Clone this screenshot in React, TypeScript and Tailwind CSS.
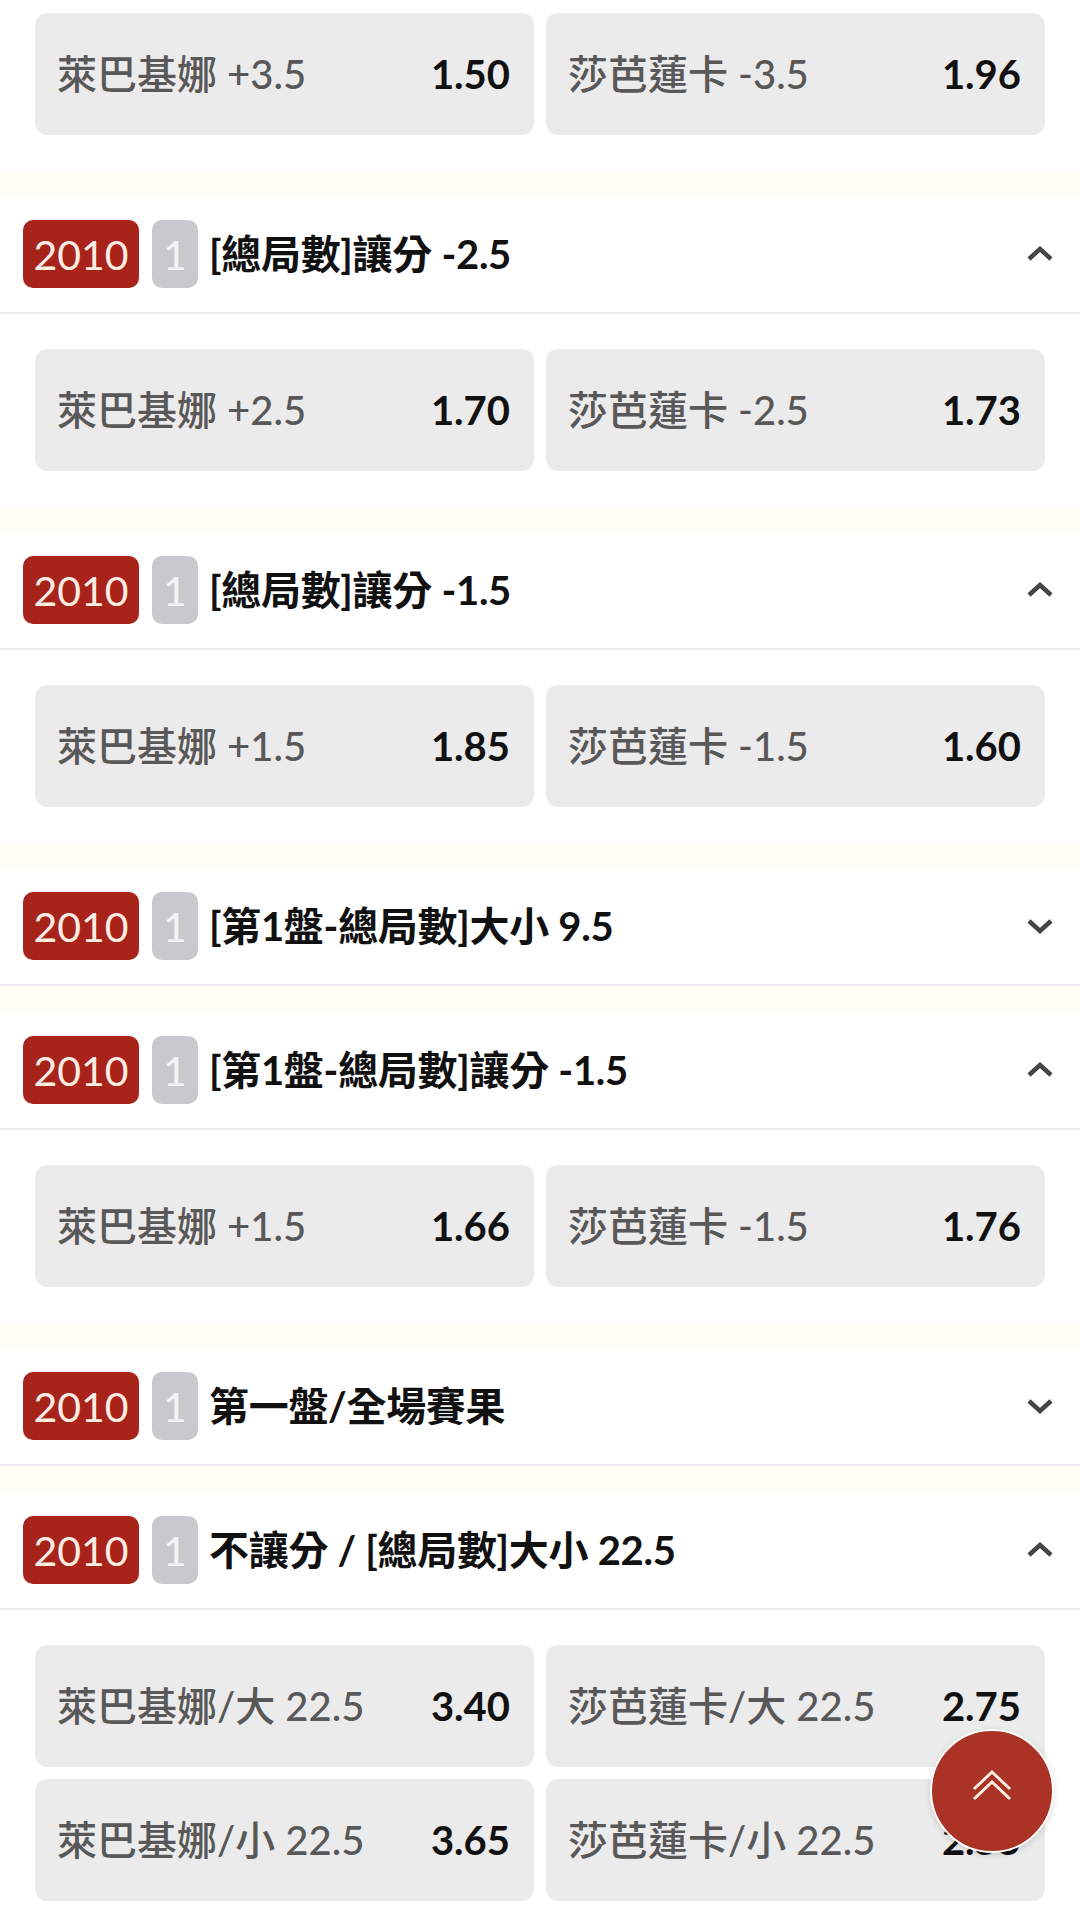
import React from "react";

type Option = { label: string; odds: string };
type Market = { title?: string; open: boolean; options: Option[] };

const markets: Market[] = [
  {
    open: true,
    options: [
      { label: "萊巴基娜 +3.5", odds: "1.50" },
      { label: "莎芭蓮卡 -3.5", odds: "1.96" },
    ],
  },
  {
    title: "[總局數]讓分 -2.5",
    open: true,
    options: [
      { label: "萊巴基娜 +2.5", odds: "1.70" },
      { label: "莎芭蓮卡 -2.5", odds: "1.73" },
    ],
  },
  {
    title: "[總局數]讓分 -1.5",
    open: true,
    options: [
      { label: "萊巴基娜 +1.5", odds: "1.85" },
      { label: "莎芭蓮卡 -1.5", odds: "1.60" },
    ],
  },
  { title: "[第1盤-總局數]大小 9.5", open: false, options: [] },
  {
    title: "[第1盤-總局數]讓分 -1.5",
    open: true,
    options: [
      { label: "萊巴基娜 +1.5", odds: "1.66" },
      { label: "莎芭蓮卡 -1.5", odds: "1.76" },
    ],
  },
  { title: "第一盤/全場賽果", open: false, options: [] },
  {
    title: "不讓分 / [總局數]大小 22.5",
    open: true,
    options: [
      { label: "萊巴基娜/大 22.5", odds: "3.40" },
      { label: "莎芭蓮卡/大 22.5", odds: "2.75" },
      { label: "萊巴基娜/小 22.5", odds: "3.65" },
      { label: "莎芭蓮卡/小 22.5", odds: "2.55" },
    ],
  },
];

function Chevron({ up }: { up: boolean }) {
  return (
    <svg width="28" height="16" viewBox="0 0 28 16" className="shrink-0">
      <polyline
        points={up ? "3,13 14,3 25,13" : "3,3 14,13 25,3"}
        fill="none"
        stroke="#454545"
        strokeWidth="4.5"
      />
    </svg>
  );
}

function MarketHeader({ title, open }: { title: string; open: boolean }) {
  return (
    <div className="h-[118px] flex items-center pl-[23px] pr-[26px] border-b-2 border-[#ececef]">
      <span className="w-[116px] h-[68px] rounded-[10px] bg-[#a8231a] text-[#fbece4] text-[41px] flex items-center justify-center leading-none">
        2010
      </span>
      <span className="ml-[13px] w-[46px] h-[68px] rounded-[10px] bg-[#c8c8cd] text-[#f4f4f6] text-[41px] flex items-center justify-center leading-none">
        1
      </span>
      <span className="ml-[11px] flex-1 text-[40px] font-bold text-[#111] leading-none tracking-[-0.3px]">
        {title}
      </span>
      <Chevron up={open} />
    </div>
  );
}

function OddsCard({ label, odds }: Option) {
  return (
    <div className="h-[122px] rounded-[12px] bg-[#ebebeb] pl-[22px] pr-[24px] flex items-center justify-between">
      <span className="text-[40px] font-medium text-[#585858] leading-none">{label}</span>
      <span className="text-[40px] font-bold text-[#111] leading-none">{odds}</span>
    </div>
  );
}

export default function App() {
  return (
    <div
      className="w-[1080px] min-h-[1909px] bg-[#fffdf6] overflow-hidden relative"
      style={{ fontFamily: 'Lato, "Noto Sans CJK TC", sans-serif' }}
    >
      {markets.map((m, i) => (
        <section key={i} className="bg-white mb-[26px]">
          {m.title && <MarketHeader title={m.title} open={m.open} />}
          {m.open && (
            <div
              className={
                i === 0
                  ? "px-[35px] pt-[13px] pb-[35px] grid grid-cols-2 gap-[12px]"
                  : "px-[35px] pt-[35px] pb-[35px] grid grid-cols-2 gap-[12px]"
              }
            >
              {m.options.map((o, j) => (
                <OddsCard key={j} {...o} />
              ))}
            </div>
          )}
        </section>
      ))}

      <button className="fixed right-[26px] bottom-[56px] w-[124px] h-[124px] rounded-full bg-[#ab3325] border-2 border-white shadow-[0_2px_6px_rgba(0,0,0,0.15)] flex items-center justify-center">
        <svg width="40" height="34" viewBox="0 0 40 34" className="-mt-[12px]">
          <polyline points="2,21 20,4 38,21" fill="none" stroke="#fbeee6" strokeWidth="3" />
          <polyline points="2,31 20,14 38,31" fill="none" stroke="#fbeee6" strokeWidth="3" />
        </svg>
      </button>
    </div>
  );
}
